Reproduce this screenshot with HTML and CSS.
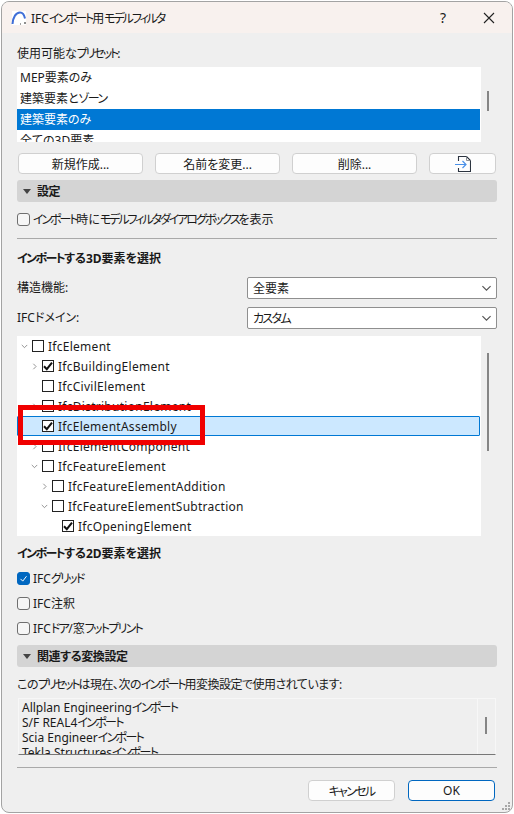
FILE: index.html
```html
<!DOCTYPE html>
<html lang="ja">
<head>
    <meta charset="UTF-8">
    <title>IFCインポート用モデルフィルタ</title>
    <link rel="stylesheet" href="styles.css">
</head>
<body>
    <svg class="defs" width="0" height="0">
        <symbol id="chev-down" viewBox="0 0 9 6"><path d="M1 1l3.5 3.5L8 1" fill="none" stroke="currentColor" stroke-width="1"/></symbol>
        <symbol id="chev-right" viewBox="0 0 6 9"><path d="M1.5 1L5 4.5 1.5 8" fill="none" stroke="currentColor" stroke-width="1"/></symbol>
        <symbol id="tick" viewBox="0 0 12 12"><path d="M2 6.2l2.8 3L10 2.6" fill="none" stroke="currentColor" stroke-width="2"/></symbol>
        <symbol id="tri" viewBox="0 0 8 5"><path d="M0 0h8L4 5z" fill="currentColor"/></symbol>
    </svg>

    <div class="dialog">
        <div class="titlebar">
            <svg class="app-icon" width="16" height="16" viewBox="0 0 16 16">
                <rect x="1" y="1" width="14" height="14" fill="#fff"/>
                <path d="M1.5 14C2 7 5 2.500 9 2.500c2.600 0 4.300 2.400 5 6" fill="none" stroke="#3f6fd8" stroke-width="2"/>
                <path d="M14 12v2M9 14h1" stroke="#444" stroke-width="1.200"/>
            </svg>
            <span class="title">IFC<span class="kana-long">インポート</span>用<span class="kana-long">モデルフィルタ</span></span>
            <span class="help">?</span>
            <svg class="close" width="12" height="12" viewBox="0 0 12 12"><path d="M1 1l10 10M11 1L1 11" stroke="#222" stroke-width="1.100"/></svg>
        </div>

        <div class="content">
            <div class="label presets-label">使用可能な<span class="kana-long">プリセット</span>:</div>
            <div class="list-wrap preset-wrap">
                <div class="list preset-list">
                    <div class="preset">MEP要素のみ</div>
                    <div class="preset">建築要素と<span class="kana">ゾーン</span></div>
                    <div class="preset selected">建築要素のみ</div>
                    <div class="preset">全ての3D要素</div>
                </div>
                <div class="scroll"><div class="thumb thumb-preset"></div></div>
            </div>

            <div class="btn-row">
                <button class="btn">新規作成...</button>
                <button class="btn">名前を変更...</button>
                <button class="btn">削除...</button>
                <button class="btn btn-icon">
                    <svg width="16" height="16" viewBox="0 0 16 16">
                        <path d="M3.500 5V.5h8l4 4v11h-12V12" fill="none" stroke="#2c3440" stroke-width="1.100"/>
                        <path d="M11.500.5v4h4" fill="none" stroke="#8a8f96" stroke-width="1"/>
                        <path d="M0 8.500h11M7.500 5L11 8.500 7.500 12" fill="none" stroke="#4a90e8" stroke-width="1.200"/>
                    </svg>
                </button>
            </div>

            <div class="section-bar bar-settings">
                <svg class="tri" width="8" height="5"><use href="#tri"/></svg>
                <span>設定</span>
            </div>

            <div class="check-row show-dialog">
                <span class="check"></span>
                <span><span class="kana-long">インポート</span>時に<span class="kana-long">モデルフィルタダイアログボックス</span>を表示</span>
            </div>
            <div class="separator sep-top"></div>

            <div class="label heading heading-3d"><span class="kana-bold">インポート</span>する3D要素を選択</div>

            <div class="field field-first">
                <span class="label">構造機能:</span>
                <div class="select"><span>全要素</span><svg width="11" height="7"><use href="#chev-down"/></svg></div>
            </div>
            <div class="field field-second">
                <span class="label">IFCドメイン:</span>
                <div class="select"><span class="kana">カスタム</span><svg width="11" height="7"><use href="#chev-down"/></svg></div>
            </div>

            <div class="list-wrap tree-wrap">
                <div class="list tree">
                    <div class="node lv0"><svg class="arrow down" width="7" height="5"><use href="#chev-down"/></svg><span class="box"></span><span>IfcElement</span></div>
                    <div class="node lv1"><svg class="arrow right" width="5" height="7"><use href="#chev-right"/></svg><span class="box"><svg width="12" height="12"><use href="#tick"/></svg></span><span>IfcBuildingElement</span></div>
                    <div class="node lv1"><span class="arrow blank"></span><span class="box"></span><span>IfcCivilElement</span></div>
                    <div class="node lv1"><svg class="arrow right" width="5" height="7"><use href="#chev-right"/></svg><span class="box"></span><span>IfcDistributionElement</span></div>
                    <div class="node lv1 current"><span class="arrow blank"></span><span class="box"><svg width="12" height="12"><use href="#tick"/></svg></span><span>IfcElementAssembly</span></div>
                    <div class="node lv1"><svg class="arrow right" width="5" height="7"><use href="#chev-right"/></svg><span class="box"></span><span>IfcElementComponent</span></div>
                    <div class="node lv1"><svg class="arrow down" width="7" height="5"><use href="#chev-down"/></svg><span class="box"></span><span>IfcFeatureElement</span></div>
                    <div class="node lv2"><svg class="arrow right" width="5" height="7"><use href="#chev-right"/></svg><span class="box"></span><span>IfcFeatureElementAddition</span></div>
                    <div class="node lv2"><svg class="arrow down" width="7" height="5"><use href="#chev-down"/></svg><span class="box"></span><span>IfcFeatureElementSubtraction</span></div>
                    <div class="node lv3"><span class="arrow blank"></span><span class="box"><svg width="12" height="12"><use href="#tick"/></svg></span><span>IfcOpeningElement</span></div>
                </div>
                <div class="scroll"><div class="thumb thumb-tree"></div></div>
                <div class="highlight"></div>
            </div>

            <div class="label heading heading-2d"><span class="kana-bold">インポート</span>する2D要素を選択</div>

            <div class="check-row grid-check">
                <span class="check on"><svg width="9" height="9" viewBox="0 0 12 12"><path d="M2 6.500l3 3L10 3" fill="none" stroke="#fff" stroke-width="1.300"/></svg></span>
                <span>IFC<span class="kana">グリッド</span></span>
            </div>
            <div class="check-row next-check">
                <span class="check"></span>
                <span>IFC注釈</span>
            </div>
            <div class="check-row next-check">
                <span class="check"></span>
                <span>IFC<span class="kana">ドア</span>/窓<span class="kana">フットプリント</span></span>
            </div>

            <div class="section-bar bar-related">
                <svg class="tri" width="8" height="5"><use href="#tri"/></svg>
                <span>関連する変換設定</span>
            </div>

            <div class="label usage-label">この<span class="kana-long">プリセット</span>は現在、次の<span class="kana-long">インポート</span>用変換設定で使用されています:</div>

            <div class="usage">
                <div class="usage-lines">
                    <div>Allplan Engineering<span class="kana">インポート</span></div>
                    <div>S/F REAL4<span class="kana">インポート</span></div>
                    <div>Scia Engineer<span class="kana">インポート</span></div>
                    <div>Tekla Structures<span class="kana">インポート</span></div>
                </div>
                <div class="usage-scroll"><div class="thumb"></div></div>
            </div>

            <div class="separator sep-bottom"></div>

            <div class="footer">
                <button class="btn btn-footer"><span class="kana">キャンセル</span></button>
                <button class="btn btn-footer btn-ok">OK</button>
            </div>
        </div>

        <svg class="grip" width="9" height="9" viewBox="0 0 9 9" fill="#a8a8a8">
            <rect x="6" y="0" width="2" height="2"/>
            <rect x="3" y="3" width="2" height="2"/><rect x="6" y="3" width="2" height="2"/>
            <rect x="0" y="6" width="2" height="2"/><rect x="3" y="6" width="2" height="2"/><rect x="6" y="6" width="2" height="2"/>
        </svg>
    </div>
</body>
</html>
```

FILE: styles.css
```css
* {
    box-sizing: border-box;
}

body {
    margin: 0;
    background-color: #fff;
    color: #1a1a1a;
    font-family: "Noto Sans", "Noto Sans CJK JP", sans-serif;
    font-size: 12px;
    font-feature-settings: "palt";
}

.defs {
    display: block;
    height: 0;
}

/* the UI font has narrower kana than Noto */
.kana {
    letter-spacing: -1.7px;
}

.kana-long {
    letter-spacing: -2.1px;
}

.kana-bold {
    letter-spacing: -1.6px;
}

.dialog {
    position: relative;
    width: 512px;
    height: 812px;
    margin: 1px 0 0 1px;
    background-color: #efefef;
    border: 1px solid #a3a3a3;
    border-radius: 8px;
    overflow: hidden;
}

/* title bar */
.titlebar {
    display: flex;
    align-items: center;
    height: 31px;
    padding-left: 9px;
    background-color: #f8f1ee;
}

.app-icon {
    margin-right: 4px;
}

.title {
    flex: 1;
}

.help {
    margin-right: 37px;
    font-size: 14px;
}

.close {
    margin-right: 17px;
}

.content {
    padding: 0 15px;
}

.label {
    line-height: 16px;
}

.presets-label {
    margin-top: 13px;
}

/* list boxes */
.list-wrap {
    position: relative;
    display: flex;
}

.list {
    width: 464px;
    background-color: #fff;
    overflow: hidden;
}

.scroll {
    flex: 1;
    position: relative;
}

.thumb {
    width: 2px;
    background-color: #858585;
}

.preset-wrap {
    margin-top: 5px;
}

.preset-list {
    height: 75px;
}

.preset {
    height: 21px;
    line-height: 21px;
    padding-left: 3px;
}

.preset.selected {
    width: 463px;
    background-color: #0078d4;
    color: #fff;
}

.thumb-preset {
    height: 20px;
    margin: 24px 0 0 6px;
}

/* buttons */
.btn-row {
    display: flex;
    gap: 12px;
    margin: 11px 1px 0;
}

.btn {
    width: 125px;
    height: 21px;
    padding: 0;
    background-color: #fdfdfd;
    border: 1px solid #d0d0d0;
    border-radius: 4px;
    color: #1a1a1a;
    font: inherit;
    font-feature-settings: inherit;
}

.btn-icon {
    width: 67px;
    display: flex;
    align-items: center;
    justify-content: center;
}

/* collapsible section headers */
.section-bar {
    display: flex;
    align-items: center;
    height: 22px;
    padding-left: 6px;
    background-color: #d4d4d4;
    border-radius: 3px;
    font-weight: 700;
    letter-spacing: -0.4px;
}

.tri {
    margin-right: 6px;
    color: #444;
}

.bar-settings {
    margin-top: 6px;
}

.bar-related {
    margin-top: 9px;
}

/* checkboxes */
.check-row {
    display: flex;
    align-items: center;
    gap: 3px;
    height: 16px;
}

.check {
    display: flex;
    align-items: center;
    justify-content: center;
    width: 13px;
    height: 13px;
    background-color: #f6f6f6;
    border: 1px solid #6f6f6f;
    border-radius: 3px;
}

.check.on {
    background-color: #0067c0;
    border-color: #0067c0;
}

.show-dialog {
    margin-top: 9px;
}

.grid-check {
    margin-top: 8px;
}

.next-check {
    margin-top: 9px;
}

.separator {
    height: 1px;
    background-color: #a9a9a9;
}

.sep-top {
    margin-top: 11px;
}

.sep-bottom {
    margin-top: 12px;
}

.heading {
    font-weight: 700;
}

.heading-3d {
    margin-top: 12px;
}

.heading-2d {
    margin-top: 10px;
}

/* dropdowns */
.field {
    display: flex;
    align-items: center;
    justify-content: space-between;
}

.field-first {
    margin-top: 10px;
}

.field-second {
    margin-top: 8px;
}

.select {
    display: flex;
    align-items: center;
    justify-content: space-between;
    width: 250px;
    height: 22px;
    padding: 0 4px 0 5px;
    background-color: #fff;
    border: 1px solid #8f8f8f;
    border-radius: 2px;
}

.select svg {
    color: #555;
}

/* tree */
.tree-wrap {
    margin-top: 7px;
}

.tree {
    height: 200px;
}

.node {
    display: flex;
    align-items: center;
    height: 20px;
    letter-spacing: 0.27px;
}

.lv0 {
    padding-left: 5px;
}

.lv1 {
    padding-left: 15px;
}

.lv2 {
    padding-left: 25px;
}

.lv3 {
    padding-left: 35px;
}

.arrow {
    flex: none;
    color: #777;
}

.arrow.blank {
    width: 10px;
}

.arrow.right {
    margin-right: 5px;
}

.arrow.down {
    margin: 0 4px 0 -1px;
}

.box {
    display: block;
    flex: none;
    width: 12px;
    height: 12px;
    margin-right: 4px;
    background-color: #fff;
    border: 1px solid #222;
    color: #111;
}

.box svg {
    display: block;
    margin: -1px;
}

.node.current {
    width: 463px;
    padding-left: 14px;
    background-color: #cce8ff;
    border: 1px solid #0078d4;
    border-radius: 1px;
}

.thumb-tree {
    height: 98px;
    margin: 17px 0 0 6px;
}

/* red annotation drawn on top of the screenshot */
.highlight {
    position: absolute;
    top: 69px;
    left: 1px;
    width: 187px;
    height: 40px;
    border: 5px solid #f00000;
}

.usage-label {
    margin-top: 10px;
    letter-spacing: -0.5px;
}

.usage {
    display: flex;
    height: 57px;
    margin: 5px 0 0 1px;
    width: 478px;
    border-top: 1px solid #f7f7f7;
    border-bottom: 1px solid #777;
    border-left: 1px solid #f7f7f7;
    border-right: 1px solid #f7f7f7;
    overflow: hidden;
}

.usage-lines {
    flex: 1;
    padding: 1px 0 0 3px;
    line-height: 15px;
    border-right: 1px solid #f7f7f7;
}

.usage-scroll {
    width: 17px;
}

.usage-scroll .thumb {
    height: 17px;
    margin: 18px 0 0 7px;
}

.footer {
    display: flex;
    justify-content: flex-end;
    gap: 13px;
    margin: 12px 2px 0 0;
}

.btn-footer {
    width: 87px;
}

.btn-ok {
    border-color: #0067c0;
}

.grip {
    position: absolute;
    right: 1px;
    bottom: 1px;
}
```
